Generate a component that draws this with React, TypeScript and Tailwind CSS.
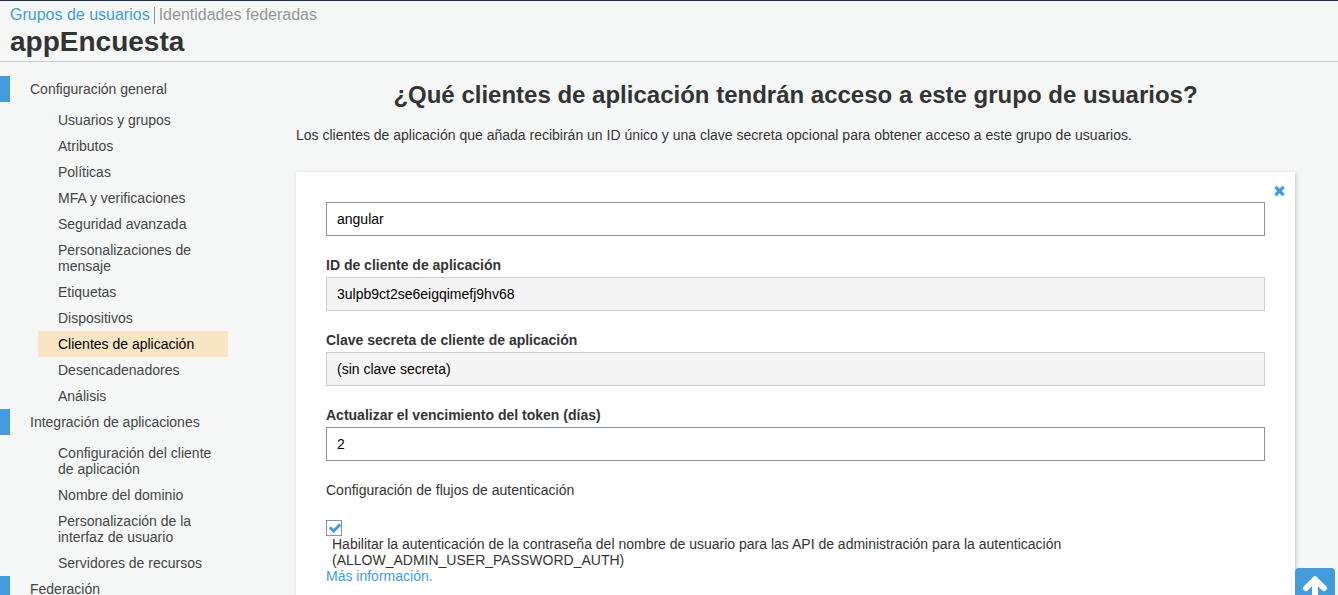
import React from "react";

type Line = string | [string, string];

interface Section {
  title: string;
  items: Line[];
}

const ACTIVE = "Clientes de aplicación";

const sections: Section[] = [
  {
    title: "Configuración general",
    items: [
      "Usuarios y grupos",
      "Atributos",
      "Políticas",
      "MFA y verificaciones",
      "Seguridad avanzada",
      ["Personalizaciones de", "mensaje"],
      "Etiquetas",
      "Dispositivos",
      ACTIVE,
      "Desencadenadores",
      "Análisis",
    ],
  },
  {
    title: "Integración de aplicaciones",
    items: [
      ["Configuración del cliente", "de aplicación"],
      "Nombre del dominio",
      ["Personalización de la", "interfaz de usuario"],
      "Servidores de recursos",
    ],
  },
  { title: "Federación", items: [] },
];

function Icon({ d, className }: { d: string; className: string }) {
  return (
    <svg viewBox="0 0 1792 1792" fill="currentColor" className={className} aria-hidden="true">
      <path d={d} />
    </svg>
  );
}

const TIMES =
  "M1490 1322q0 40-28 68l-136 136q-28 28-68 28t-68-28l-294-294-294 294q-28 28-68 28t-68-28l-136-136q-28-28-28-68t28-68l294-294-294-294q-28-28-28-68t28-68l136-136q28-28 68-28t68 28l294 294 294-294q28-28 68-28t68 28l136 136q28 28 28 68t-28 68l-294 294 294 294q28 28 28 68z";
const CHECK =
  "M1671 566q0 40-28 68l-724 724-136 136q-28 28-68 28t-68-28l-136-136-362-362q-28-28-28-68t28-68l136-136q28-28 68-28t68 28l294 295 656-657q28-28 68-28t68 28l136 136q28 28 28 68z";
const ARROW_UP =
  "M1675 971q0 51-37 90l-75 75q-38 38-91 38-54 0-90-38l-294-293v704q0 52-37.5 84.5t-90.5 32.5h-128q-53 0-90.5-32.5t-37.5-84.5v-704l-294 293q-36 38-90 38t-90-38l-75-75q-38-38-38-90 0-53 38-91l651-651q35-37 90-37 54 0 91 37l651 651q37 39 37 91z";

function Sidebar() {
  return (
    <nav className="w-[228px] shrink-0 pt-[14px] text-[#444]">
      {sections.map((s) => (
        <div key={s.title}>
          <div className="h-[26px] border-l-[10px] border-[#429bdb] py-[5px] pl-5">{s.title}</div>
          <ul className="pt-[5px] pl-[38px]">
            {s.items.map((item) => {
              const lines = typeof item === "string" ? [item] : item;
              return (
                <li
                  key={lines[0]}
                  className={
                    item === ACTIVE
                      ? "bg-[#f9e4c4] py-[5px] pl-5 text-black"
                      : "py-[5px] pl-5"
                  }
                >
                  {lines.map((l) => (
                    <span key={l} className="block whitespace-nowrap">
                      {l}
                    </span>
                  ))}
                </li>
              );
            })}
          </ul>
        </div>
      ))}
    </nav>
  );
}

function Field({ label, value, readOnly }: { label: string; value: string; readOnly?: boolean }) {
  return (
    <div className="mt-[21px]">
      <div className="h-5 font-bold leading-4">{label}</div>
      <div
        className={
          readOnly
            ? "h-[34px] border border-[#ccc] bg-[#f4f4f4] px-[10px] leading-8 text-black"
            : "h-[34px] border border-[#879596] bg-white px-[10px] leading-8 text-black"
        }
      >
        {value}
      </div>
    </div>
  );
}

export default function App() {
  return (
    <div className="relative flex h-[595px] w-[1338px] flex-col overflow-hidden bg-[#f5f7f7] font-['Liberation_Sans',Arial,sans-serif] text-[14px] leading-4 text-[#333]">
      <header className="h-[62px] shrink-0 border-t border-b border-t-[#232f3e] border-b-[#ccc] pl-[10px]">
        <div className="flex h-[23px] items-center pt-[5px] text-[16px] leading-[18px]">
          <span className="text-[#429bdb]">Grupos de usuarios</span>
          <span className="mx-1 h-[17px] w-px bg-[#879596]" />
          <span className="text-[#959595]">Identidades federadas</span>
        </div>
        <h1 className="mt-[2px] text-[28px] font-bold leading-8">appEncuesta</h1>
      </header>

      <div className="flex min-h-0 flex-1">
        <Sidebar />
        <main className="ml-[68px] w-[999px] shrink-0">
          <h2 className="mt-[18px] text-center text-[24px] font-bold leading-[30px]">
            ¿Qué clientes de aplicación tendrán acceso a este grupo de usuarios?
          </h2>
          <p className="mt-[17px]">
            Los clientes de aplicación que añada recibirán un ID único y una clave secreta opcional para obtener acceso a
            este grupo de usuarios.
          </p>
          <section className="relative mt-[29px] h-[500px] bg-white px-[30px] pt-[30px] shadow-[1px_1px_4px_rgba(0,0,0,0.2)]">
            <button className="absolute top-[11px] right-2 text-[#429bdb]" aria-label="Eliminar">
              <Icon d={TIMES} className="block h-[15px] w-[15px]" />
            </button>
            <div className="h-[34px] border border-[#879596] bg-white px-[10px] leading-8 text-black">angular</div>
            <Field label="ID de cliente de aplicación" value="3ulpb9ct2se6eigqimefj9hv68" readOnly />
            <Field label="Clave secreta de cliente de aplicación" value="(sin clave secreta)" readOnly />
            <Field label="Actualizar el vencimiento del token (días)" value="2" />
            <p className="mt-[21px]">Configuración de flujos de autenticación</p>
            <div className="mt-[22px] flex h-4 w-4 items-center justify-center border border-[#879596] text-[#429bdb]">
              <Icon d={CHECK} className="ml-[2px] h-[14px] w-[14px] shrink-0" />
            </div>
            <div className="pl-[6px]">
              Habilitar la autenticación de la contraseña del nombre de usuario para las API de administración para la
              autenticación
              <br />
              (ALLOW_ADMIN_USER_PASSWORD_AUTH)
            </div>
            <a className="block text-[#429bdb]">Más información.</a>
          </section>
        </main>
      </div>

      <button
        className="absolute top-[568px] left-[1295px] flex h-10 w-10 justify-center rounded bg-[#429bdb] pt-[5px] text-white"
        aria-label="Volver arriba"
      >
        <Icon d={ARROW_UP} className="h-7 w-7" />
      </button>
    </div>
  );
}
